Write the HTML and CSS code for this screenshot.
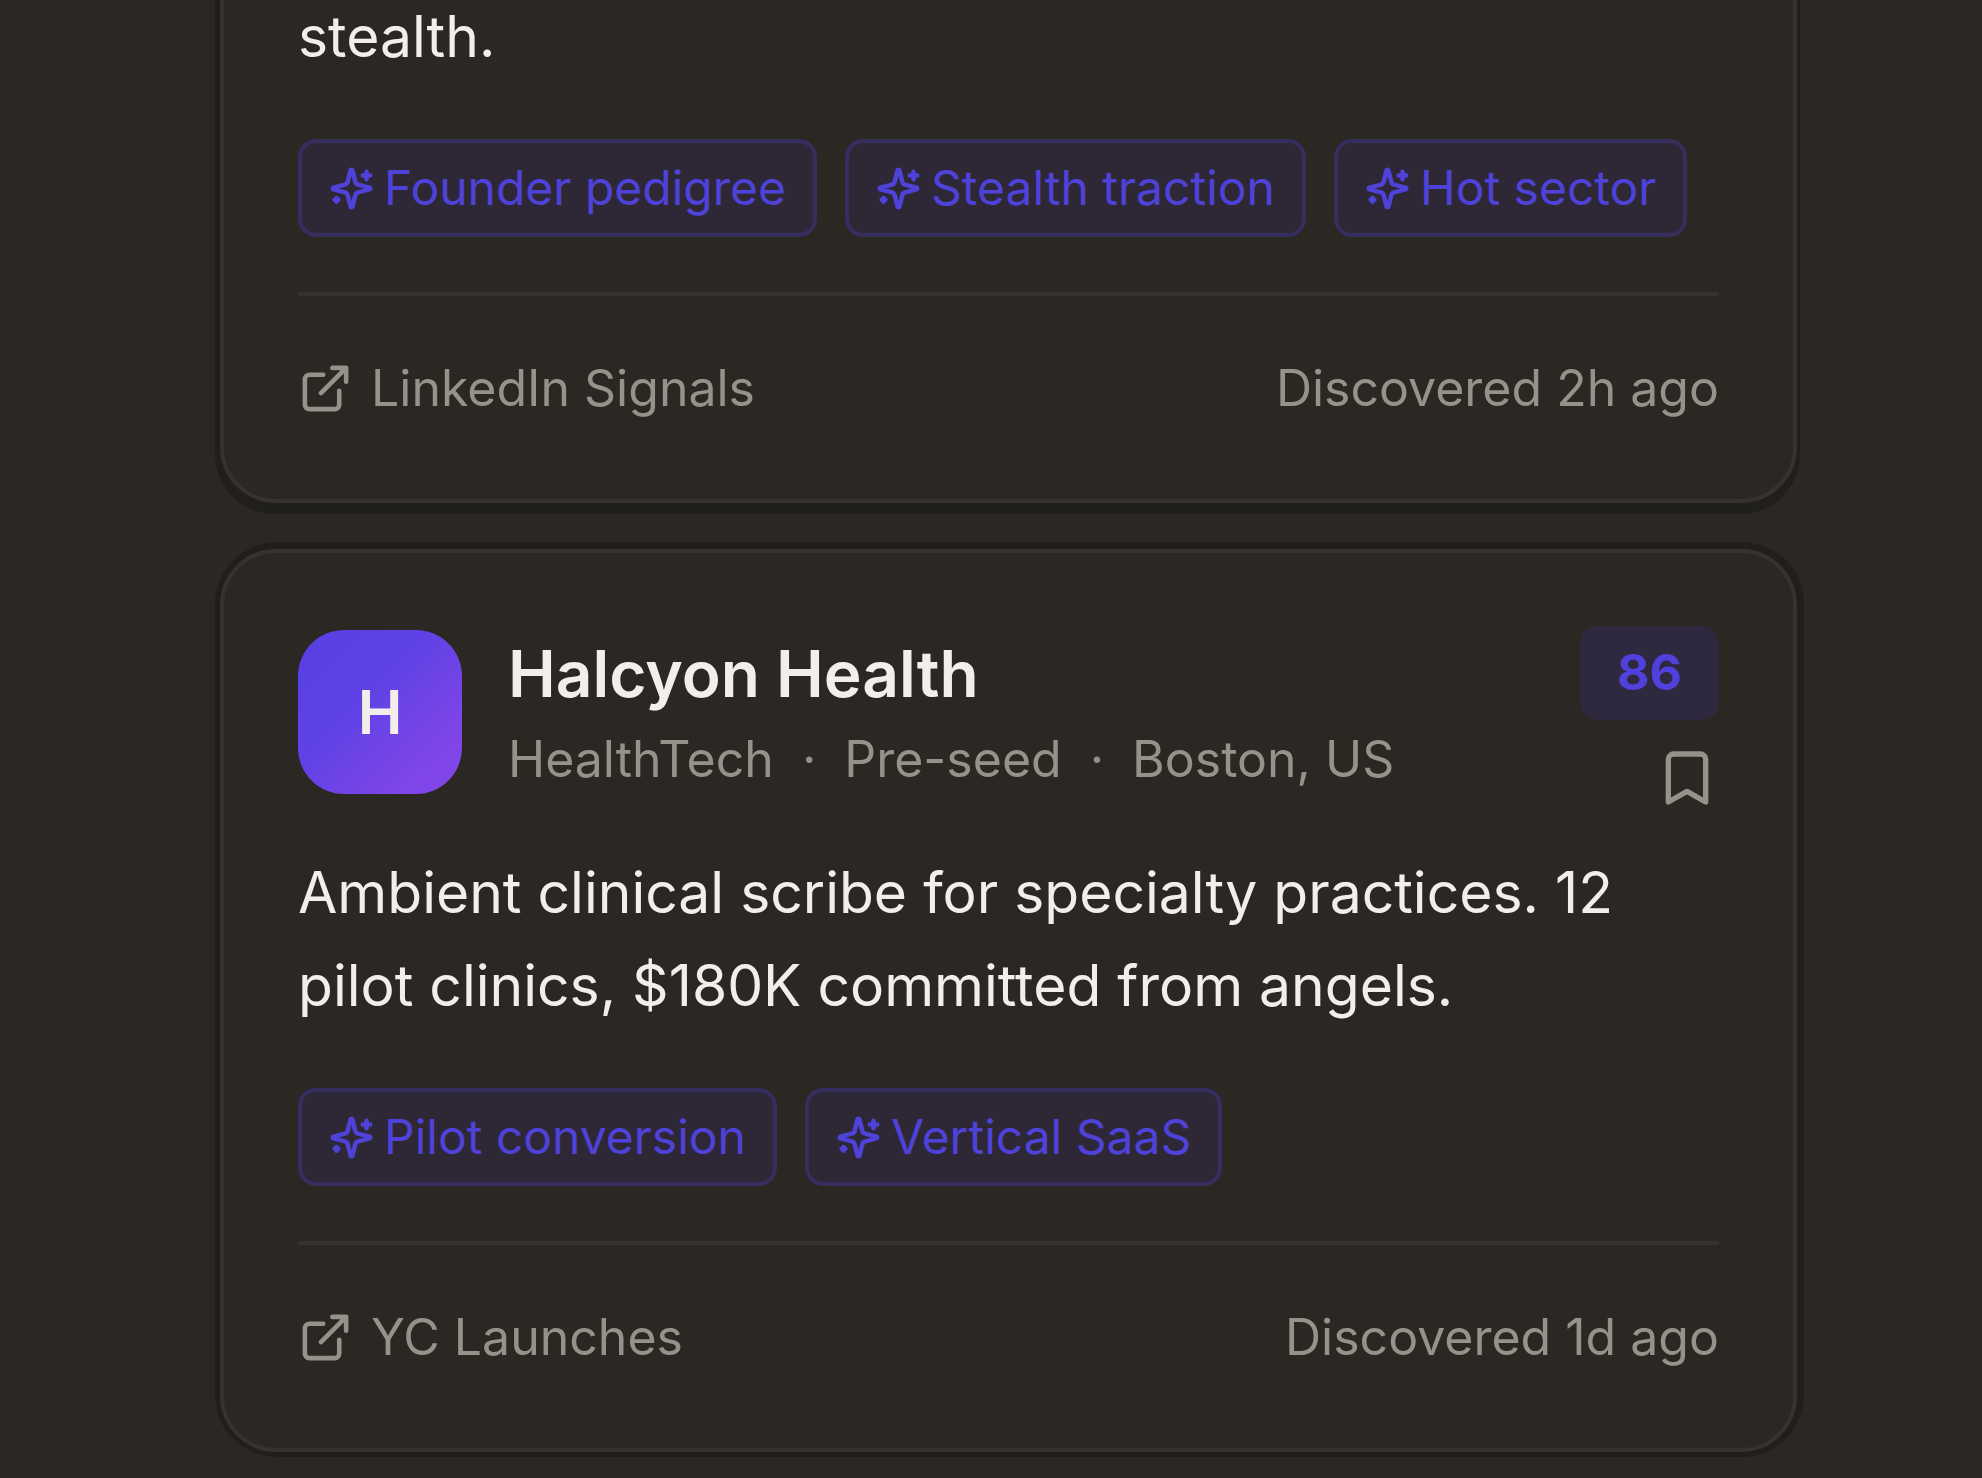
FILE: index.html
```
<!DOCTYPE html>
<html lang="en">
<head>
  <meta charset="UTF-8" />
  <meta name="viewport" content="width=device-width, initial-scale=1.0" />
  <title>Deal feed</title>
  <link rel="stylesheet" href="styles.css">
</head>
<body>
  <!-- shared icons -->
  <svg class="icon-defs" aria-hidden="true">
    <symbol id="sparkles" viewBox="0 0 24 24">
      <path d="M9.937 15.5A2 2 0 0 0 8.5 14.063l-6.135-1.582a.5.5 0 0 1 0-.962L8.5 9.936A2 2 0 0 0 9.937 8.5l1.582-6.135a.5.5 0 0 1 .963 0L14.063 8.5A2 2 0 0 0 15.5 9.937l6.135 1.581a.5.5 0 0 1 0 .964L15.5 14.063a2 2 0 0 0-1.437 1.437l-1.582 6.135a.5.5 0 0 1-.963 0z" />
      <path d="M20 3v4M22 5h-4M4 17v2M5 18H3" />
    </symbol>
    <symbol id="external" viewBox="0 0 24 24">
      <path d="M15 3h6v6M10 14 21 3M18 13v6a2 2 0 0 1-2 2H5a2 2 0 0 1-2-2V8a2 2 0 0 1 2-2h6" />
    </symbol>
    <symbol id="bookmark" viewBox="0 0 24 24">
      <path d="m19 21-7-4-7 4V5a2 2 0 0 1 2-2h10a2 2 0 0 1 2 2v16z" />
    </symbol>
  </svg>

  <main class="feed">
    <article class="card card-first">
      <p class="description">stealth.</p>
      <div class="chips">
        <span class="chip"><svg class="icon"><use href="#sparkles" /></svg>Founder pedigree</span>
        <span class="chip"><svg class="icon"><use href="#sparkles" /></svg>Stealth traction</span>
        <span class="chip"><svg class="icon"><use href="#sparkles" /></svg>Hot sector</span>
      </div>
      <footer class="card-footer">
        <a class="source" href="#"><svg class="icon"><use href="#external" /></svg>LinkedIn Signals</a>
        <span>Discovered 2h ago</span>
      </footer>
    </article>

    <article class="card">
      <header class="card-header">
        <div class="avatar">H</div>
        <div class="company">
          <h2>Halcyon Health</h2>
          <p class="meta"><span>HealthTech</span><span>·</span><span>Pre-seed</span><span>·</span><span>Boston, US</span></p>
        </div>
        <div class="actions">
          <span class="score">86</span>
          <button class="save" type="button" aria-label="Save"><svg class="icon"><use href="#bookmark" /></svg></button>
        </div>
      </header>
      <p class="description">Ambient clinical scribe for specialty practices. 12 pilot clinics, $180K committed from angels.</p>
      <div class="chips">
        <span class="chip"><svg class="icon"><use href="#sparkles" /></svg>Pilot conversion</span>
        <span class="chip"><svg class="icon"><use href="#sparkles" /></svg>Vertical SaaS</span>
      </div>
      <footer class="card-footer">
        <a class="source" href="#"><svg class="icon"><use href="#external" /></svg>YC Launches</a>
        <span>Discovered 1d ago</span>
      </footer>
    </article>
  </main>
</body>
</html>
```
FILE: styles.css
```
* {
  box-sizing: border-box;
}
body {
  margin: 0;
  background: #2b2723;
  color: #f2eeea;
  font-family: 'Inter', 'Liberation Sans', sans-serif;
  overflow: hidden;
}
h2, p {
  margin: 0;
}
.icon-defs {
  display: none;
}
.icon {
  flex: none;
  fill: none;
  stroke: currentColor;
  stroke-width: 2;
  stroke-linecap: round;
  stroke-linejoin: round;
}

/* the feed is scrolled to its end, older cards run off the top */
.feed {
  display: flex;
  flex-direction: column;
  justify-content: flex-end;
  gap: 46px;
  height: 100vh;
  padding: 0 185px 26px 220px;
}
.card {
  flex: none;
  padding: 73px 74px 74px;
  border: 4px solid #36322f;
  border-radius: 56px;
  background: #2b2723;
  box-shadow: 1px -1px 0 6px #211f1b;
}
.card-first {
  box-shadow: -1px 7px 0 4px #211f1b;
}

.card-header {
  display: flex;
  align-items: flex-start;
  gap: 46px;
  margin-bottom: 36px;
}
.avatar {
  display: flex;
  align-items: center;
  justify-content: center;
  flex: none;
  width: 164px;
  height: 164px;
  margin-top: 4px;
  border-radius: 46px;
  background: linear-gradient(135deg, #5640e2, #5f42e5 40%, #7f45e8 80%, #8246e9);
  font-size: 60px;
  font-weight: 600;
}
.company {
  flex: 1;
  padding-top: 4px;
}
.company h2 {
  font-size: 64px;
  font-weight: 600;
  line-height: 88px;
}
.meta {
  display: flex;
  gap: 28px;
  color: #96918b;
  font-size: 50px;
  line-height: 82px;
}
.actions {
  display: flex;
  flex-direction: column;
  align-items: flex-end;
  gap: 26px;
}
.score {
  padding: 0 37px 2px;
  border-radius: 18px;
  background: #2f2940;
  color: #5040dc;
  font-size: 50px;
  font-weight: 700;
  line-height: 92px;
}
.save {
  display: flex;
  padding: 0;
  border: none;
  background: none;
  color: #96918b;
  cursor: pointer;
}
.save .icon {
  width: 64px;
  height: 64px;
}

.description {
  font-size: 57px;
  line-height: 93px;
}

.chips {
  display: flex;
  gap: 28px;
  margin: 56px 0 55px;
}
.chip {
  display: flex;
  align-items: center;
  gap: 10px;
  padding: 0 27px;
  border: 4px solid #352e5f;
  border-radius: 18px;
  background: #2e2836;
  color: #4f42d8;
  font-size: 48px;
  line-height: 90px;
  white-space: nowrap;
}
.chip .icon {
  width: 45px;
  height: 45px;
  stroke-width: 2.4;
}

.card-footer {
  display: flex;
  justify-content: space-between;
  padding-top: 55px;
  border-top: 4px solid #36322f;
  color: #96918b;
  font-size: 50px;
  line-height: 74px;
}
.source {
  display: flex;
  align-items: center;
  gap: 18px;
  color: inherit;
  text-decoration: none;
}
.source .icon {
  width: 55px;
  height: 55px;
}
```
